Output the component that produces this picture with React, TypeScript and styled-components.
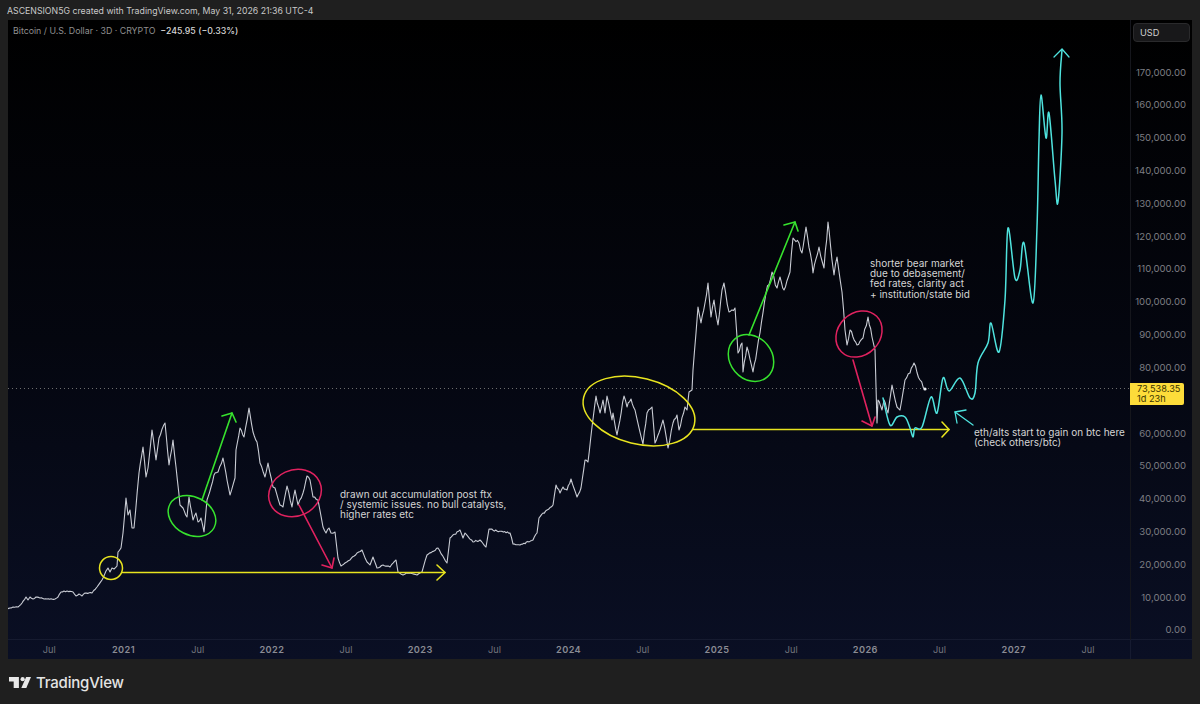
import React from 'react';
import styled, { createGlobalStyle } from 'styled-components';

type Pt = [number, number];

const pricePoints: Pt[] = [
    [7, 609], [10, 608], [13, 607], [18, 607], [22, 603], [26, 597], [28, 600], [30, 597], [33, 599], [36, 597], [40, 598], [47, 599], [55, 599], [58, 597], [61, 592], [67, 591], [73, 592], [76, 596], [79, 594], [82, 596], [85, 593], [92, 593], [97, 587], [102, 580], [106, 571], [108, 568], [110, 572], [112, 568], [114, 569], [117, 566], [118, 552], [121, 548],
    [123, 533], [126, 498], [128, 515], [130, 510], [132, 528], [134, 528], [139, 473], [143, 447], [146, 477], [148, 468], [152, 430], [156, 460], [159, 438], [165, 423], [169, 465], [173, 440], [176, 467], [180, 505], [183, 508], [187, 517], [189, 497], [193, 520], [196, 513], [198, 522], [201, 518], [204, 532], [207, 500], [211, 487], [214, 475], [218, 472], [223, 458], [230, 495], [235, 478], [236, 450], [240, 428], [244, 437], [249, 408], [253, 432], [257, 442], [260, 463], [265, 477], [268, 463], [273, 487], [275, 488], [280, 505], [283, 507], [287, 486], [292, 507], [295, 490], [298, 505], [303, 493], [307, 476], [310, 480], [313, 497], [318, 500], [323, 527], [326, 533], [329, 528], [331, 533], [335, 532], [338, 558], [341, 566], [345, 563], [350, 560], [357, 553], [362, 550], [367, 562], [370, 565], [373, 557], [377, 568], [383, 565], [390, 567],
    [396, 560], [398, 572], [403, 575], [408, 573], [417, 575], [422, 572], [427, 555], [438, 548], [447, 563], [450, 538], [460, 530], [463, 538], [465, 533], [473, 542], [480, 540], [486, 547], [489, 529], [497, 531], [510, 533], [513, 544], [520, 545], [533, 540], [537, 533], [539, 518], [547, 510], [553, 505], [556, 485], [560, 493], [563, 487], [567, 490], [571, 479], [577, 497], [581, 488], [585, 460], [588, 462], [592, 427], [596, 396], [600, 413], [603, 400], [605, 413], [607, 396], [612, 420], [613, 413], [617, 435], [624, 396], [627, 407], [631, 399], [635, 410], [643, 444], [647, 413], [652, 407], [655, 443], [663, 420], [668, 448], [673, 423], [677, 415], [679, 430], [685, 407], [687, 410], [689, 392], [692, 390],
    [693, 370], [696, 333], [698, 307], [701, 323], [705, 303], [708, 283], [711, 317], [714, 300], [718, 325], [722, 290], [724, 283], [729, 312], [735, 308], [737, 337], [738, 353], [742, 343], [743, 372], [747, 347], [753, 372], [757, 350], [760, 333], [766, 293], [772, 272], [777, 288], [780, 277], [784, 290], [790, 272], [793, 238], [799, 243], [802, 253], [806, 227], [812, 263], [813, 273], [819, 247], [824, 268], [828, 222], [832, 260], [834, 275], [837, 257], [842, 292], [845, 330], [847, 345], [850, 330], [853, 337], [857, 345], [863, 338], [868, 317], [872, 337], [875, 350], [877, 423], [878, 400], [882, 410], [884, 400], [888, 413], [892, 385], [897, 407], [900, 410], [905, 380], [910, 373], [914, 363], [920, 380], [925, 389],
];

const forecastPoints: Pt[] = [
    [883, 398], [890, 425], [897, 417], [905, 417], [910, 428], [913, 437], [915, 428], [922, 427], [931, 397], [937, 413], [943, 378], [949, 391], [960, 378], [970, 398], [975, 393], [978, 363], [988, 343], [991, 323], [999, 352], [1005, 300], [1008, 228], [1015, 278], [1020, 270], [1024, 243], [1033, 303], [1037, 227], [1039, 140], [1041, 95], [1046, 138], [1049, 113], [1055, 180], [1058, 202], [1062, 133], [1060, 83], [1062, 50],
];

const priceLabels = ['170,000.00', '160,000.00', '150,000.00', '140,000.00', '130,000.00', '120,000.00', '110,000.00', '100,000.00', '90,000.00', '80,000.00', '', '60,000.00', '50,000.00', '40,000.00', '30,000.00', '20,000.00', '10,000.00', '0.00'];
const timeLabels = ['Jul', '2021', 'Jul', '2022', 'Jul', '2023', 'Jul', '2024', 'Jul', '2025', 'Jul', '2026', 'Jul', '2027', 'Jul'];

const YELLOW = '#e8e41f';
const GREEN = '#37e22e';
const RED = '#e0225f';
const TEAL = '#4fe3de';

const toPolyline = (pts: Pt[]) => pts.map((p) => p.join(',')).join(' ');

// the traced points are too clean, add the per-bar wiggle back in
const addBarNoise = (pts: Pt[]) => {
    const out: Pt[] = [];
    pts.forEach((p, i) => {
        out.push(p);
        const next = pts[i + 1];
        if (!next || next[0] - p[0] < 2.5) return;
        const steps = Math.floor((next[0] - p[0]) / 1.3);
        for (let s = 1; s < steps; s++) {
            const t = s / steps;
            const x = p[0] + (next[0] - p[0]) * t;
            const y = p[1] + (next[1] - p[1]) * t;
            const amp = 0.3 + Math.max(0, 620 - y) / 160;
            const noise = Math.sin(x * 12.9898) * 43758.5453;
            out.push([+x.toFixed(1), +(y + (noise - Math.floor(noise) - 0.5) * amp * 2).toFixed(1)]);
        }
    });
    return out;
};

// catmull-rom, the forecast was drawn by hand with the brush tool
const toSmoothPath = (pts: Pt[]) => {
    let d = `M${pts[0][0]} ${pts[0][1]}`;
    for (let i = 0; i < pts.length - 1; i++) {
        const p0 = pts[Math.max(i - 1, 0)];
        const p1 = pts[i];
        const p2 = pts[i + 1];
        const p3 = pts[Math.min(i + 2, pts.length - 1)];
        const c1x = p1[0] + (p2[0] - p0[0]) / 6;
        const c1y = p1[1] + (p2[1] - p0[1]) / 6;
        const c2x = p2[0] - (p3[0] - p1[0]) / 6;
        const c2y = p2[1] - (p3[1] - p1[1]) / 6;
        d += ` C${c1x} ${c1y} ${c2x} ${c2y} ${p2[0]} ${p2[1]}`;
    }
    return d;
};

const Arrow = ({ from, to, a, b, color, width = 1.6 }: { from: Pt; to: Pt; a: Pt; b: Pt; color: string; width?: number }) => (
    <g stroke={color} strokeWidth={width} fill="none" strokeLinecap="round" strokeLinejoin="round">
        <line x1={from[0]} y1={from[1]} x2={to[0]} y2={to[1]} />
        <polyline points={toPolyline([a, to, b])} />
    </g>
);

const Ring = ({ cx, cy, rx, ry, rot, color }: { cx: number; cy: number; rx: number; ry: number; rot: number; color: string }) => (
    <ellipse cx={cx} cy={cy} rx={rx} ry={ry} transform={`rotate(${rot} ${cx} ${cy})`} fill="none" stroke={color} strokeWidth={1.5} />
);

const Drawing = () => (
    <PlotSvg viewBox="8 20 1122 620">
        <line x1="8" y1="388.5" x2="1130" y2="388.5" stroke="#6d6d6d" strokeWidth="1" strokeDasharray="1 3" />
        <polyline points={toPolyline(addBarNoise(pricePoints))} fill="none" stroke="#c9ccd4" strokeWidth="1.1" strokeLinejoin="round" />
        <circle cx="925" cy="389" r="1.6" fill="#eceef2" />

        <Ring cx={111} cy={568} rx={11.5} ry={11.5} rot={0} color={YELLOW} />
        <Arrow from={[122.5, 572.5]} to={[445, 572.5]} a={[437, 565]} b={[437, 580]} color={YELLOW} />
        <Ring cx={639} cy={411} rx={57} ry={33} rot={14} color={YELLOW} />
        <Arrow from={[693, 429.5]} to={[949, 429.5]} a={[942, 422]} b={[942, 437]} color={YELLOW} />

        <Ring cx={192} cy={516} rx={25} ry={19} rot={28} color={GREEN} />
        <Arrow from={[202, 500]} to={[232, 413]} a={[222, 416]} b={[236, 422]} color={GREEN} />
        <Ring cx={751} cy={358} rx={25} ry={21} rot={50} color={GREEN} />
        <Arrow from={[749, 335]} to={[795, 222]} a={[784, 225]} b={[798, 231]} color={GREEN} />

        <Ring cx={295} cy={493} rx={27} ry={23} rot={-25} color={RED} />
        <Arrow from={[299, 505]} to={[332, 568]} a={[322, 565]} b={[334, 558]} color={RED} />
        <Ring cx={859} cy={334} rx={25} ry={21} rot={-45} color={RED} />
        <Arrow from={[853, 360]} to={[872, 426]} a={[862, 421]} b={[875, 417]} color={RED} />

        <path d={toSmoothPath(forecastPoints)} fill="none" stroke={TEAL} strokeWidth="1.5" strokeLinecap="round" />
        <polyline points={toPolyline([[1054, 57], [1062, 49], [1069, 57]])} fill="none" stroke={TEAL} strokeWidth="1.3" strokeLinecap="round" />
        <Arrow from={[973, 425]} to={[955, 412]} a={[966, 410]} b={[957, 423]} color={TEAL} width={1.3} />
    </PlotSvg>
);

const TvLogo = () => (
    <LogoSvg viewBox="0 0 30 15">
        <path d="M13.5 0H0v6.2h6.4V15h7.1V0Z" />
        <circle cx="18.6" cy="2.9" r="2.9" />
        <path d="M23.4 0h6.6l-6.4 15h-6.8l6.6-15Z" />
    </LogoSvg>
);

export default function App() {
    return (
        <>
            <GlobalStyle />
            <Page>
                <Header>ASCENSION5G created with TradingView.com, May 31, 2026 21:36 UTC-4</Header>
                <ChartFrame>
                    <Plot>
                        <Drawing />
                        <Legend>
                            Bitcoin / U.S. Dollar · 3D · CRYPTO<Change>−245.95 (−0.33%)</Change>
                        </Legend>
                        <Note $x={340} $y={489}>
                            drawn out accumulation post ftx<br />
                            / systemic issues. no bull catalysts,<br />
                            higher rates etc
                        </Note>
                        <Note $x={870} $y={258}>
                            shorter bear market<br />
                            due to debasement/<br />
                            fed rates, clarity act<br />
                            + institution/state bid
                        </Note>
                        <Note $x={974} $y={427}>
                            eth/alts start to gain on btc here<br />
                            (check others/btc)
                        </Note>
                    </Plot>
                    <PriceAxis>
                        <CurrencyButton>USD</CurrencyButton>
                        <PriceList>
                            {priceLabels.map((label, idx) => (
                                <PriceLabel key={idx}>{label}</PriceLabel>
                            ))}
                        </PriceList>
                        <LastPrice>
                            73,538.35<br />1d 23h
                        </LastPrice>
                    </PriceAxis>
                    <TimeAxis>
                        {timeLabels.map((label, idx) => (
                            <TimeLabel key={idx} $year={label !== 'Jul'}>{label}</TimeLabel>
                        ))}
                    </TimeAxis>
                    <AxisCorner />
                </ChartFrame>
                <Footer>
                    <TvLogo />
                    <Brand>TradingView</Brand>
                </Footer>
            </Page>
        </>
    );
}

const GlobalStyle = createGlobalStyle`
    html, body {
        margin: 0;
        padding: 0;
        background: #1f1f1f;
    }
`;

const Page = styled.div`
    width: 1200px;
    height: 704px;
    display: flex;
    flex-direction: column;
    background: #1f1f1f;
    font-family: Inter, "Liberation Sans", sans-serif;
    overflow: hidden;
`;

const Header = styled.div`
    height: 20px;
    padding-left: 7px;
    font-size: 8.75px;
    line-height: 22px;
    color: #c9c9c9;
    white-space: nowrap;
`;

const ChartFrame = styled.div`
    margin: 0 8px;
    height: 639px;
    display: grid;
    grid-template-columns: 1122px 62px;
    grid-template-rows: 620px 19px;
    background: linear-gradient(to bottom, #000000 0%, #04060f 50%, #0a0f24 100%);
`;

const Plot = styled.div`
    position: relative;
    border-bottom: 1px solid #161b30;
    box-sizing: border-box;
    overflow: hidden;
`;

const PlotSvg = styled.svg`
    display: block;
    width: 1122px;
    height: 620px;
`;

const Legend = styled.div`
    position: absolute;
    left: 5px;
    top: 5px;
    font-size: 8.8px;
    line-height: 12px;
    color: #8f8f8f;
    white-space: nowrap;
`;

const Change = styled.span`
    margin-left: 5px;
    color: #d6d6d6;
    font-weight: 500;
`;

// page coordinates, same as the svg viewBox
const Note = styled.div<{ $x: number; $y: number }>`
    position: absolute;
    left: ${(p) => p.$x - 8}px;
    top: ${(p) => p.$y - 20}px;
    font-size: 10px;
    line-height: 10.2px;
    color: #d4d4d4;
    white-space: nowrap;
`;

const PriceAxis = styled.div`
    position: relative;
    display: flex;
    flex-direction: column;
    align-items: flex-end;
    border-left: 1px solid #15161c;
    border-bottom: 1px solid #161b30;
    box-sizing: border-box;
    padding: 3px 2px 0 2px;
`;

const CurrencyButton = styled.div`
    align-self: stretch;
    height: 19px;
    box-sizing: border-box;
    background: #18181a;
    border: 1px solid #2a2a2c;
    border-radius: 4px;
    padding-left: 6px;
    font-size: 9.2px;
    line-height: 17px;
    color: #d0d0d0;
`;

const PriceList = styled.div`
    margin-top: 14.6px;
    padding-right: 4px;
    display: flex;
    flex-direction: column;
    align-items: flex-end;
`;

const PriceLabel = styled.div`
    height: 32.82px;
    font-size: 9.6px;
    line-height: 32.82px;
    color: #7c7d82;
    white-space: nowrap;
`;

const LastPrice = styled.div`
    position: absolute;
    left: -1px;
    top: 363px;
    width: 54px;
    height: 22px;
    box-sizing: border-box;
    padding: 1px 0 0 7px;
    background: #fddc3a;
    border-radius: 0 2px 2px 0;
    font-size: 9.2px;
    line-height: 10.2px;
    color: #3a3200;
    white-space: nowrap;
`;

const TimeAxis = styled.div`
    display: flex;
    padding-left: 4.2px;
`;

const TimeLabel = styled.div<{ $year: boolean }>`
    flex: 0 0 74.2px;
    text-align: center;
    font-size: 9.2px;
    line-height: 20px;
    letter-spacing: ${(p) => (p.$year ? '0.4px' : '0')};
    font-weight: ${(p) => (p.$year ? 600 : 400)};
    color: ${(p) => (p.$year ? '#8a8c94' : '#73757d')};
`;

const AxisCorner = styled.div`
    border-left: 1px solid #161b30;
`;

const Footer = styled.div`
    flex: 1;
    display: flex;
    align-items: center;
    gap: 5px;
    padding: 2px 0 0 9px;
`;

const LogoSvg = styled.svg`
    width: 22px;
    height: 11px;
    fill: #e8e8e8;
`;

const Brand = styled.div`
    font-size: 15px;
    font-weight: 500;
    letter-spacing: -0.2px;
    color: #e4e4e4;
`;
